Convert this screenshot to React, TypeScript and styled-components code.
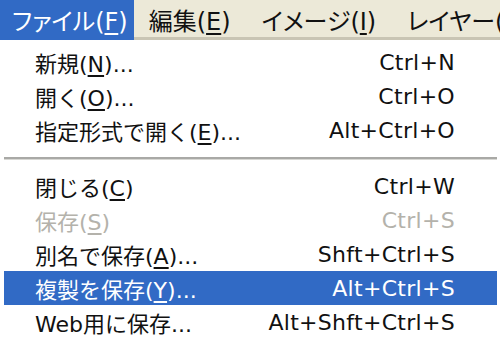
import React from 'react';
import styled, { createGlobalStyle } from 'styled-components';

const GlobalStyle = createGlobalStyle`
  html, body {
    margin: 0;
    padding: 0;
    background: #ffffff;
  }
  body {
    width: 500px;
    height: 337px;
    overflow: hidden;
  }
`;

const FONT = `"DejaVu Sans", "Noto Sans CJK JP", sans-serif`;

const StyledScreen = styled.div`
  width: 500px;
  height: 337px;
  display: flex;
  flex-direction: column;
  overflow: hidden;
  font-family: ${FONT};
`;

const StyledMenuBar = styled.div`
  display: flex;
  align-items: stretch;
  gap: 3px;
  height: 40px;
  flex: none;
  background: #ece9d8;
  box-shadow: inset 0 -3px 0 #c9c5b4;
  white-space: nowrap;
  overflow: hidden;
`;

const StyledBarItem = styled.div<{ $active?: boolean }>`
  display: flex;
  align-items: center;
  flex: none;
  padding: 0 ${({ $active }) => ($active ? '6px' : '16px')} 1px 12px;
  font-size: 24px;
  font-feature-settings: 'palt';
  background: ${({ $active }) => ($active ? '#316ac5' : 'transparent')};
  color: ${({ $active }) => ($active ? '#ffffff' : '#111111')};
`;

const StyledDropdown = styled.div`
  flex: 1;
  background: #ffffff;
  padding: 5px 3px 0 4px;
`;

const StyledRow = styled.div<{ $selected?: boolean; $disabled?: boolean }>`
  display: flex;
  align-items: center;
  justify-content: space-between;
  height: 34px;
  padding: 0 42px 0 31px;
  font-size: 22px;
  white-space: nowrap;
  background: ${({ $selected }) => ($selected ? '#316ac5' : 'transparent')};
  color: ${({ $selected, $disabled }) =>
    $selected ? '#ffffff' : $disabled ? '#b4b2ab' : '#111111'};
`;

const StyledShortcut = styled.span`
  letter-spacing: 0.3px;
`;

const StyledSeparator = styled.div`
  height: 22px;
  display: flex;
  align-items: center;
  &::after {
    content: '';
    display: block;
    width: 100%;
    height: 2px;
    background: #a9a9a6;
    box-shadow: 0 1px 0 #d8d8d4;
  }
`;

const StyledKey = styled.span`
  text-decoration: underline;
  text-underline-offset: 3px;
`;

interface ItemProps {
  label: string;
  mnemonic?: string;
  dots?: boolean;
  shortcut: string;
  selected?: boolean;
  disabled?: boolean;
}

const Label: React.FC<{ label: string; mnemonic?: string; dots?: boolean }> = ({
  label,
  mnemonic,
  dots,
}) => (
  <span>
    {label}
    {mnemonic && (
      <>
        (<StyledKey>{mnemonic}</StyledKey>)
      </>
    )}
    {dots && '...'}
  </span>
);

const MenuItem: React.FC<ItemProps> = ({ label, mnemonic, dots, shortcut, selected, disabled }) => (
  <StyledRow $selected={selected} $disabled={disabled}>
    <Label label={label} mnemonic={mnemonic} dots={dots} />
    <StyledShortcut>{shortcut}</StyledShortcut>
  </StyledRow>
);

export default function App() {
  return (
    <StyledScreen>
      <GlobalStyle />
      <StyledMenuBar>
        <StyledBarItem $active>
          <Label label="ファイル" mnemonic="F" />
        </StyledBarItem>
        <StyledBarItem>
          <Label label="編集" mnemonic="E" />
        </StyledBarItem>
        <StyledBarItem>
          <Label label="イメージ" mnemonic="I" />
        </StyledBarItem>
        <StyledBarItem>
          <Label label="レイヤー" mnemonic="L" />
        </StyledBarItem>
      </StyledMenuBar>
      <StyledDropdown>
        <MenuItem label="新規" mnemonic="N" dots shortcut="Ctrl+N" />
        <MenuItem label="開く" mnemonic="O" dots shortcut="Ctrl+O" />
        <MenuItem label="指定形式で開く" mnemonic="E" dots shortcut="Alt+Ctrl+O" />
        <StyledSeparator />
        <MenuItem label="閉じる" mnemonic="C" shortcut="Ctrl+W" />
        <MenuItem label="保存" mnemonic="S" shortcut="Ctrl+S" disabled />
        <MenuItem label="別名で保存" mnemonic="A" dots shortcut="Shft+Ctrl+S" />
        <MenuItem label="複製を保存" mnemonic="Y" dots shortcut="Alt+Ctrl+S" selected />
        <MenuItem label="Web用に保存" dots shortcut="Alt+Shft+Ctrl+S" />
      </StyledDropdown>
    </StyledScreen>
  );
}
